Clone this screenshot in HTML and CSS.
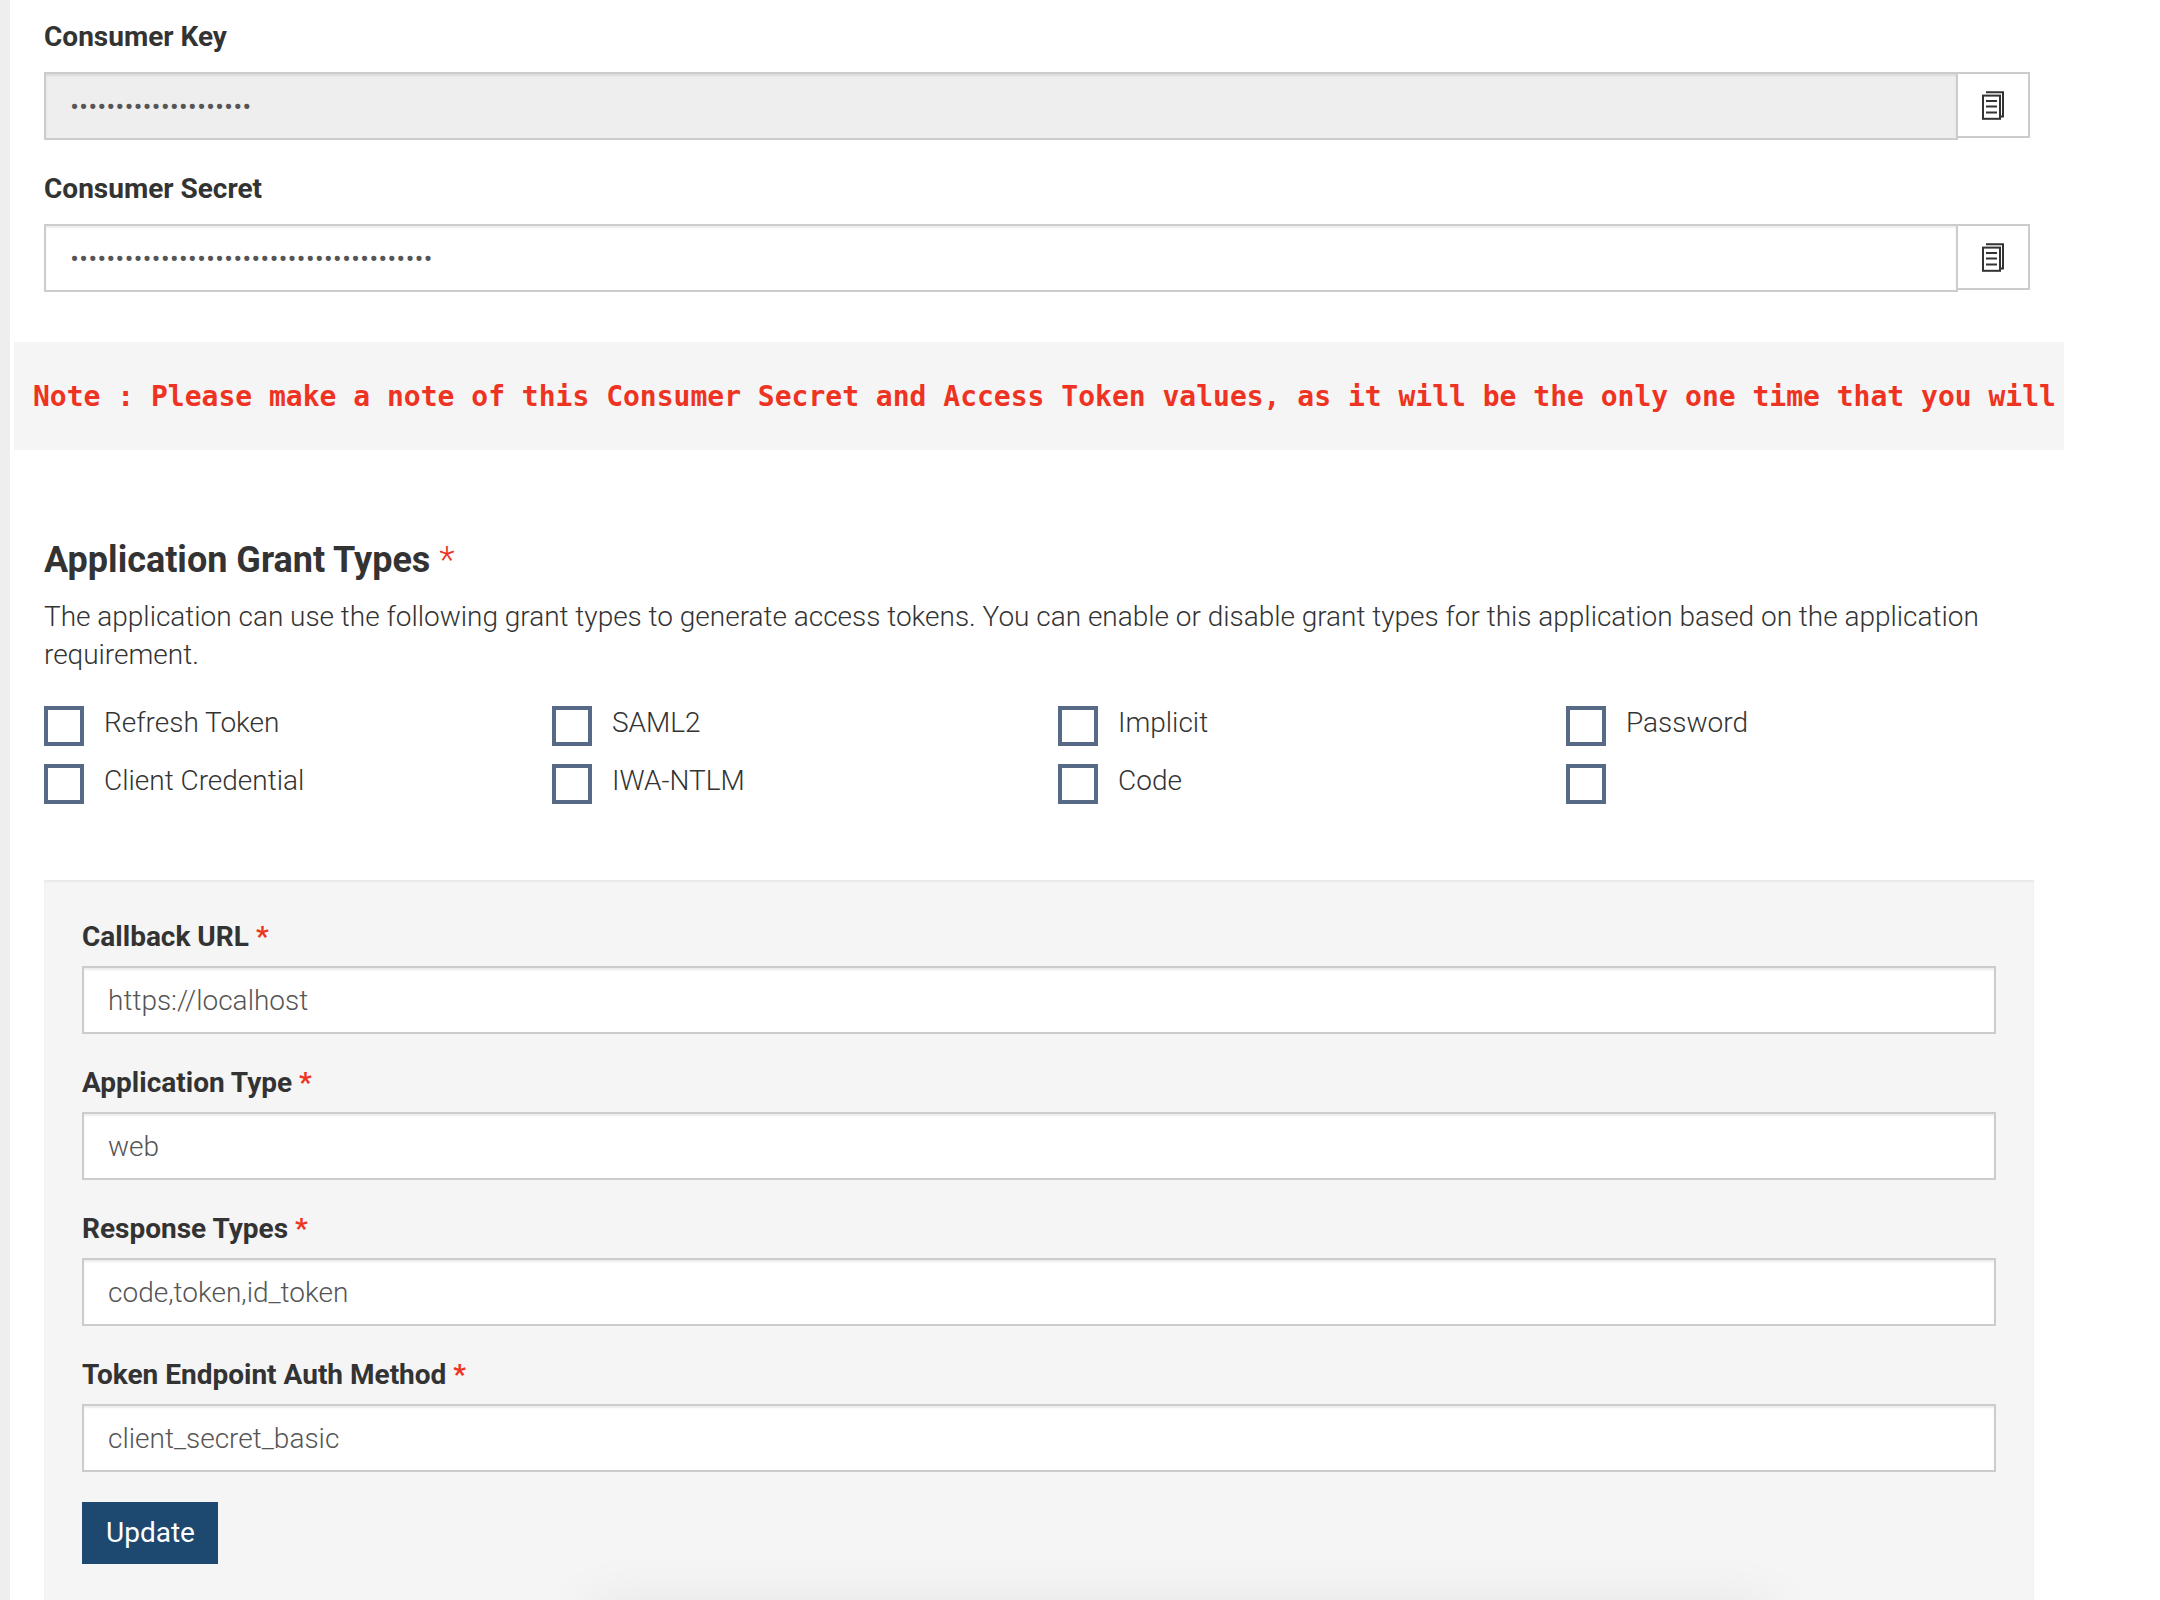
FILE: index.html
```html
<!DOCTYPE html>
<html lang="en">
<head>
<meta charset="utf-8">
<title>Application Keys</title>
<link rel="stylesheet" href="styles.css">
</head>
<body>
<main class="page">
  <section class="keys">
    <div class="field key-field">
      <label class="label">Consumer Key</label>
      <div class="input-group">
        <div class="input input-disabled">••••••••••••••••••••</div>
        <button class="copy" aria-label="Copy">
          <svg class="copy-icon" width="24" height="30" viewBox="0 0 24 30" fill="none" stroke="#333" stroke-width="2"><path d="M6 3.2V2.2H22V26.4H19"/><rect x="2" y="5.6" width="17" height="23.2"/><path d="M5 10.9H16M5 16.6H16M5 22.4H16"/></svg>
        </button>
      </div>
    </div>
    <div class="field key-field">
      <label class="label">Consumer Secret</label>
      <div class="input-group">
        <div class="input">••••••••••••••••••••••••••••••••••••••••</div>
        <button class="copy" aria-label="Copy">
          <svg class="copy-icon" width="24" height="30" viewBox="0 0 24 30" fill="none" stroke="#333" stroke-width="2"><path d="M6 3.2V2.2H22V26.4H19"/><rect x="2" y="5.6" width="17" height="23.2"/><path d="M5 10.9H16M5 16.6H16M5 22.4H16"/></svg>
        </button>
      </div>
    </div>
  </section>

  <pre class="note">Note : Please make a note of this Consumer Secret and Access Token values, as it will be the only one time that you will</pre>

  <section class="grants">
    <h2 class="heading">Application Grant Types <span class="required">*</span></h2>
    <p class="description">The application can use the following grant types to generate access tokens. You can enable or disable grant types for this application based on the application requirement.</p>
    <div class="grant-grid">
      <label class="check"><span class="box"></span>Refresh Token</label>
      <label class="check"><span class="box"></span>SAML2</label>
      <label class="check"><span class="box"></span>Implicit</label>
      <label class="check"><span class="box"></span>Password</label>
      <label class="check"><span class="box"></span>Client Credential</label>
      <label class="check"><span class="box"></span>IWA-NTLM</label>
      <label class="check"><span class="box"></span>Code</label>
      <label class="check"><span class="box"></span></label>
    </div>
  </section>

  <section class="panel">
    <div class="field">
      <label class="label">Callback URL <span class="required">*</span></label>
      <div class="input">https://localhost</div>
    </div>
    <div class="field">
      <label class="label">Application Type <span class="required">*</span></label>
      <div class="input">web</div>
    </div>
    <div class="field">
      <label class="label">Response Types <span class="required">*</span></label>
      <div class="input">code,token,id_token</div>
    </div>
    <div class="field">
      <label class="label">Token Endpoint Auth Method <span class="required">*</span></label>
      <div class="input">client_secret_basic</div>
    </div>
    <button class="update">Update</button>
    <div class="bottom-shadow"></div>
  </section>
</main>
</body>
</html>
```
FILE: styles.css
```css
* { box-sizing: border-box; }

body {
  margin: 0;
  background: #fff;
  color: #333;
  font: 300 28px/40px Roboto, "Liberation Sans", sans-serif;
}

.page {
  display: flex;
  flex-direction: column;
  height: 1600px;
  overflow: hidden;
  border-left: 10px solid #eee;
}

.keys {
  display: flex;
  flex-direction: column;
  gap: 28px;
  width: 1986px;
  margin: 16px 0 0 34px;
}

.field {
  display: flex;
  flex-direction: column;
  gap: 10px;
}

.key-field { gap: 16px; }

.label {
  height: 40px;
  font-weight: 700;
  line-height: 42px;
}

.required { color: #ee3322; }

.input-group {
  display: flex;
  align-items: flex-start;
}

.input {
  flex: 1;
  height: 68px;
  min-height: 68px;
  padding: 13px 24px 11px;
  border: 2px solid #ccc;
  background: #fff;
  box-shadow: inset 0 2px 2px rgba(0, 0, 0, 0.075);
  color: #555;
}

.input-disabled { background: #eee; }

.copy {
  display: flex;
  align-items: center;
  justify-content: center;
  width: 74px;
  height: 66px;
  margin-left: -2px;
  padding: 0;
  border: 2px solid #ccc;
  background: #fff;
}

.copy-icon { display: block; }

.note {
  width: 2050px;
  margin: 50px 0 0 4px;
  padding: 35px 0 33px 19px;
  overflow: hidden;
  background: #f5f5f5;
  color: #ee3322;
  font: 700 28px/40px "DejaVu Sans Mono", monospace;
}

.grants {
  width: 1990px;
  margin: 90px 0 0 34px;
}

.heading {
  margin: 0 0 18px;
  font-size: 36px;
  font-weight: 700;
  line-height: 40px;
}

.heading .required { font-weight: 300; }

.description {
  margin: 0 0 28px;
  line-height: 38px;
  letter-spacing: -0.016px;
}

.grant-grid {
  display: grid;
  grid-template-columns: 508px 506px 508px 1fr;
  row-gap: 14px;
}

.check {
  display: flex;
  gap: 20px;
  height: 44px;
  line-height: 42px;
}

.box {
  width: 40px;
  height: 40px;
  margin-top: 4px;
  border: 4px solid #566a85;
  background: #fff;
}

.panel {
  position: relative;
  display: flex;
  flex: 1;
  flex-direction: column;
  gap: 28px;
  width: 1990px;
  margin: 76px 0 0 34px;
  padding: 36px 38px 0;
  background: #f5f5f5;
  box-shadow: inset 0 2px 2px rgba(0, 0, 0, 0.05);
}

.update {
  width: 136px;
  height: 62px;
  margin-top: 2px;
  padding: 0 0 0 1px;
  border: 0;
  background: #1d486f;
  color: #fff;
  font: 400 28px/60px Roboto, "Liberation Sans", sans-serif;
}

.bottom-shadow {
  position: absolute;
  bottom: -40px;
  left: 546px;
  width: 1180px;
  height: 40px;
  box-shadow: 0 8px 60px rgba(0, 0, 0, 0.09);
}
```
